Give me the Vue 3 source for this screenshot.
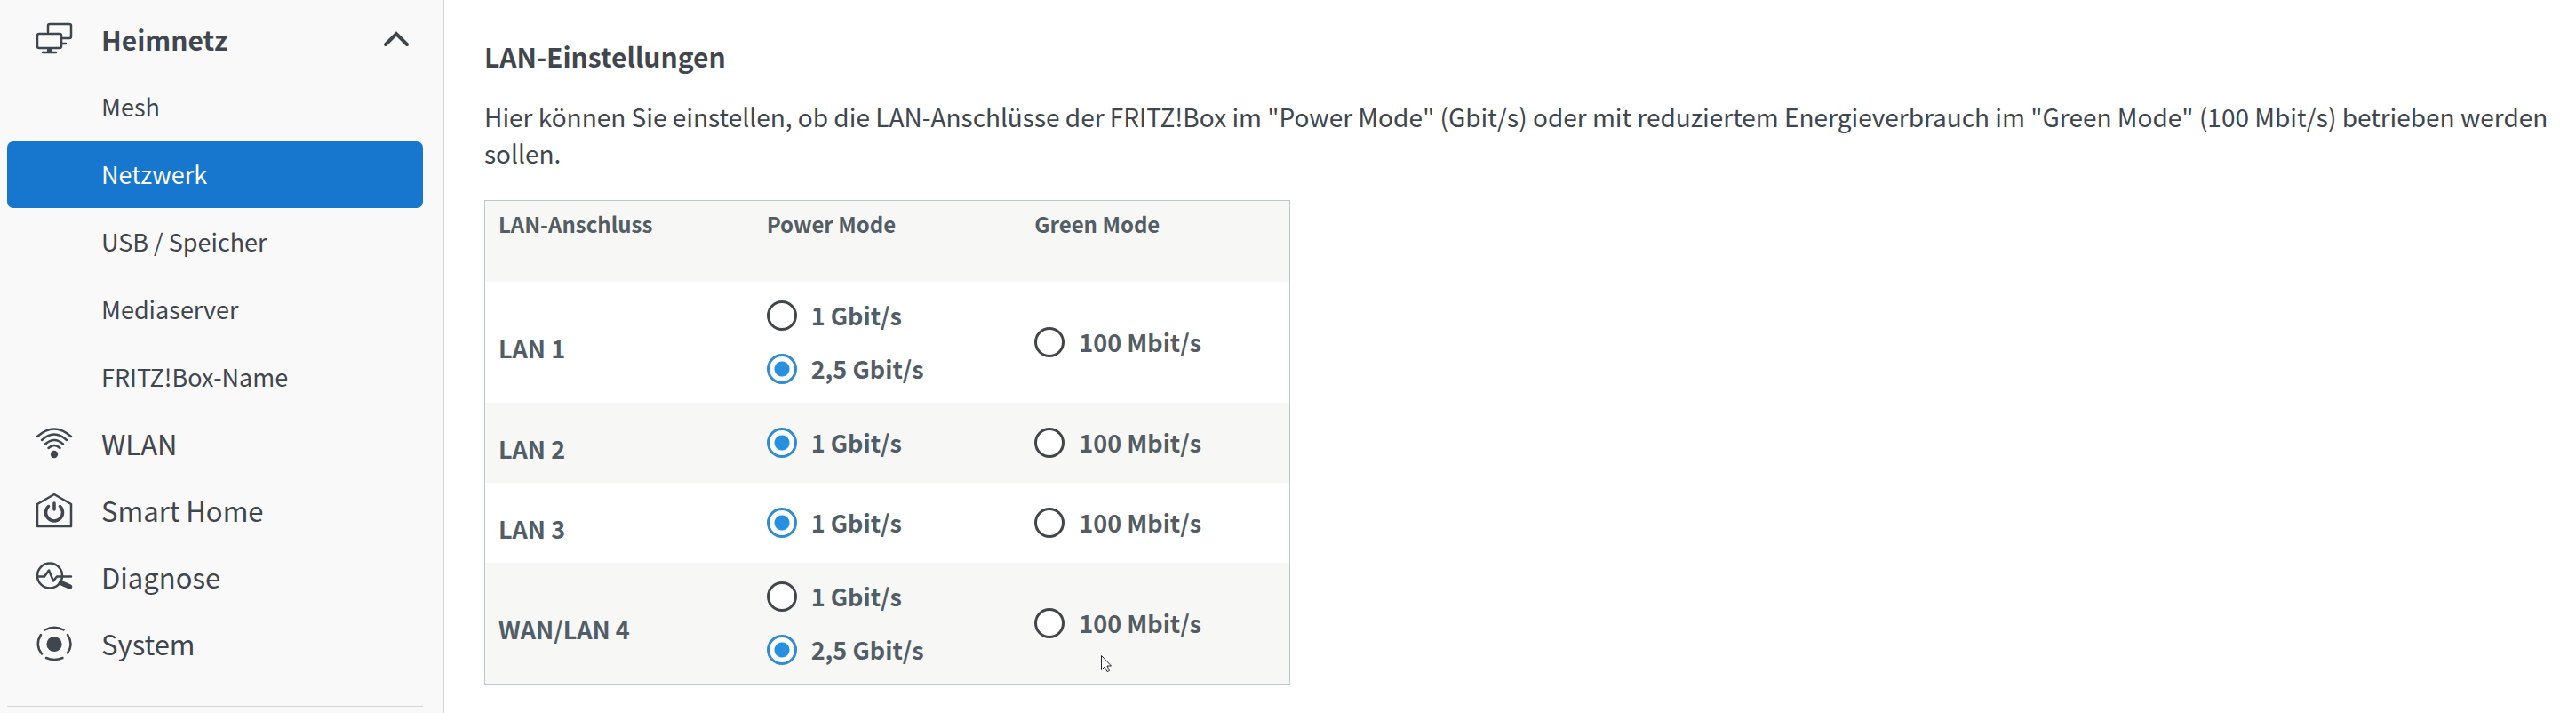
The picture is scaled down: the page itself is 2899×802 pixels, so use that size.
<script setup>
import { reactive } from 'vue'

const subItems = ['Mesh', 'Netzwerk', 'USB / Speicher', 'Mediaserver', 'FRITZ!Box-Name']
const activeItem = 'Netzwerk'

const ports = reactive([
  { id: 'lan1', name: 'LAN 1', power: ['1 Gbit/s', '2,5 Gbit/s'], selected: '2,5 Gbit/s' },
  { id: 'lan2', name: 'LAN 2', power: ['1 Gbit/s'], selected: '1 Gbit/s' },
  { id: 'lan3', name: 'LAN 3', power: ['1 Gbit/s'], selected: '1 Gbit/s' },
  { id: 'lan4', name: 'WAN/LAN 4', power: ['1 Gbit/s', '2,5 Gbit/s'], selected: '2,5 Gbit/s' }
])
const green = '100 Mbit/s'
</script>

<template>
  <div class="page">
    <nav class="sidebar" aria-label="Hauptmenü">
      <button class="item open" type="button" aria-expanded="true">
        <svg class="icon" viewBox="0 0 40 40" aria-hidden="true">
          <path d="M13 12V5q0-2 2-2h22q2 0 2 2v12q0 2-2 2h-8M28 25h5" />
          <rect x="1" y="14" width="27" height="16" rx="2" />
          <path d="M7 35h15" />
          <path d="M12 31h5v4h-5z" class="solid" />
        </svg>
        <span class="text">Heimnetz</span>
        <svg class="chevron" viewBox="0 0 30 18" aria-hidden="true"><path d="M3 15 15 3l12 12" /></svg>
      </button>

      <div class="sub">
        <a v-for="s in subItems" :key="s" href="#" class="subitem" :class="{ active: s === activeItem }">{{ s }}</a>
      </div>

      <a class="item" href="#">
        <svg class="icon" viewBox="0 0 40 40" aria-hidden="true">
          <path d="M1 12Q20-5 39 12M6 16Q20 3 34 16M10 20.500Q20 11.500 30 20.500M13.500 25Q20 19 26.500 25" />
          <circle cx="20" cy="32" r="4.200" class="solid" />
        </svg>
        <span class="text">WLAN</span>
      </a>
      <a class="item" href="#">
        <svg class="icon" viewBox="0 0 40 40" aria-hidden="true">
          <path d="M1 13 20 2l19 11v25H1z" />
          <path d="M13.500 15.500a9.500 9.500 0 1 0 13 0M20 12v7" class="thick" />
        </svg>
        <span class="text">Smart Home</span>
      </a>
      <a class="item" href="#">
        <svg class="icon" viewBox="0 0 40 40" aria-hidden="true">
          <circle cx="15" cy="18.500" r="14" />
          <path d="M1 19.500h8l5-7 5 12 4-5h16" />
          <path d="M27.500 26.500 37.500 31" class="handle" />
        </svg>
        <span class="text">Diagnose</span>
      </a>
      <a class="item" href="#">
        <svg class="icon" viewBox="0 0 40 40" aria-hidden="true">
          <path d="M9.500 4.500Q20-1 30.500 4.500M35 10q7 11 0 20.500M29.500 36q-9.500 4-18.500 0M6 31.500Q-2 21 5 10" />
          <circle cx="20" cy="20.500" r="8.600" class="solid" />
        </svg>
        <span class="text">System</span>
      </a>
      <hr class="divider" />
    </nav>

    <main class="content">
      <h1 class="title">LAN-Einstellungen</h1>
      <p class="intro">
        Hier können Sie einstellen, ob die LAN-Anschlüsse der FRITZ!Box im "Power Mode" (Gbit/s) oder mit reduziertem
        Energieverbrauch im "Green Mode" (100 Mbit/s) betrieben werden sollen.
      </p>

      <table class="ports">
        <thead>
          <tr>
            <th scope="col">LAN-Anschluss</th>
            <th scope="col">Power Mode</th>
            <th scope="col">Green Mode</th>
          </tr>
        </thead>
        <tbody>
          <tr v-for="(p, i) in ports" :key="p.id">
            <th scope="row" class="port">{{ p.name }}</th>
            <td>
              <div class="options">
                <label v-for="o in p.power" :key="o" class="option">
                  <input v-model="p.selected" type="radio" :name="p.id" :value="o" />
                  <span>{{ o }}</span>
                </label>
              </div>
            </td>
            <td>
              <label class="option">
                <input v-model="p.selected" type="radio" :name="p.id" :value="green" />
                <span>{{ green }}</span>
              </label>
              <svg v-if="i === ports.length - 1" class="pointer" viewBox="0 0 12 19" aria-hidden="true">
                <path d="M.5.5v16l3.500-3.500 3 5.500 2.500-1-2.500-5.500h4.500z" />
              </svg>
            </td>
          </tr>
        </tbody>
      </table>
    </main>
  </div>
</template>

<style>
body {
  margin: 0;
  background: #fff;
}
</style>

<style scoped>
.page {
  display: flex;
  min-height: 100vh;
  box-sizing: border-box;
  font-family: "Noto Sans CJK SC", "Noto Sans", sans-serif;
  color: #3f464d;
}

.sidebar {
  flex: 0 0 500px;
  box-sizing: border-box;
  padding: 7px 23px 0 8px;
  background: #f9f9f9;
  border-right: 1px solid #d4d6d7;
}

.item {
  display: flex;
  align-items: center;
  width: 100%;
  height: 75px;
  box-sizing: border-box;
  padding: 0 15px 2px 33px;
  border: 0;
  background: none;
  color: inherit;
  font: 400 31px/40px "Noto Sans CJK SC", "Noto Sans", sans-serif;
  text-align: left;
  text-decoration: none;
}

.item.open {
  font-size: 30px;
  font-weight: 700;
}

.item .text {
  flex: 1;
  margin-left: 33px;
}

.icon {
  width: 40px;
  height: 40px;
  overflow: visible;
  fill: none;
  stroke: currentColor;
  stroke-width: 2.5;
  stroke-linecap: round;
  stroke-linejoin: round;
}

.icon .solid {
  fill: currentColor;
  stroke: none;
}

.icon .thick {
  stroke-width: 3.5;
}

.icon .handle {
  stroke-width: 5.5;
}

.chevron {
  width: 30px;
  height: 18px;
  fill: none;
  stroke: currentColor;
  stroke-width: 4;
  stroke-linecap: round;
}

.sub {
  display: flex;
  flex-direction: column;
  gap: 1px;
  margin-top: 1px;
}

.subitem {
  height: 75px;
  padding-left: 106px;
  border-radius: 7px;
  color: inherit;
  font-size: 27px;
  line-height: 73px;
  text-decoration: none;
}

.subitem.active {
  background: #1777cf;
  color: #fff;
}

.divider {
  height: 1px;
  margin: 32px 0 0;
  border: 0;
  background: #d4d6d7;
}

.content {
  flex: 1;
  min-width: 0;
  padding: 42px 24px 30px 45px;
}

.title {
  margin: 0;
  font-size: 30px;
  font-weight: 700;
  line-height: 42px;
}

.intro {
  margin: 27px 0 32px;
  font-size: 28px;
  line-height: 41px;
}

.ports {
  width: 907px;
  max-width: 100%;
  table-layout: fixed;
  border-collapse: separate;
  border-spacing: 0;
  border: 1px solid #bac8cc;
  color: #525d65;
}

.ports th,
.ports td {
  box-sizing: border-box;
  height: 90px;
  padding: 21px 0 21px 15px;
  font-weight: 700;
  text-align: left;
  vertical-align: middle;
}

.ports thead th {
  height: 91px;
  padding-top: 8px;
  font-size: 24px;
  line-height: 36px;
  vertical-align: top;
}

.ports thead tr,
.ports tbody tr:nth-child(even) {
  background: #f7f7f5;
}

.ports .port {
  padding: 14px 0 0 15px;
  font-size: 27px;
  line-height: 34px;
}

.ports td {
  position: relative;
}

.options {
  display: flex;
  flex-direction: column;
  gap: 26px;
}

.option {
  display: flex;
  align-items: center;
  gap: 16px;
  font-size: 27px;
  line-height: 34px;
}

.option input {
  flex: none;
  width: 34px;
  height: 34px;
  margin: 0;
  appearance: none;
  border: 3px solid #42464b;
  border-radius: 50%;
  background: #fff;
}

.option input:checked {
  border-color: #2f8bd6;
  background: radial-gradient(circle, #2790e0 8px, #fff 9px);
}

.pointer {
  position: absolute;
  top: 104px;
  left: 90px;
  width: 12px;
  height: 19px;
  fill: #fff;
  stroke: #22252b;
  stroke-width: 1;
}
</style>
